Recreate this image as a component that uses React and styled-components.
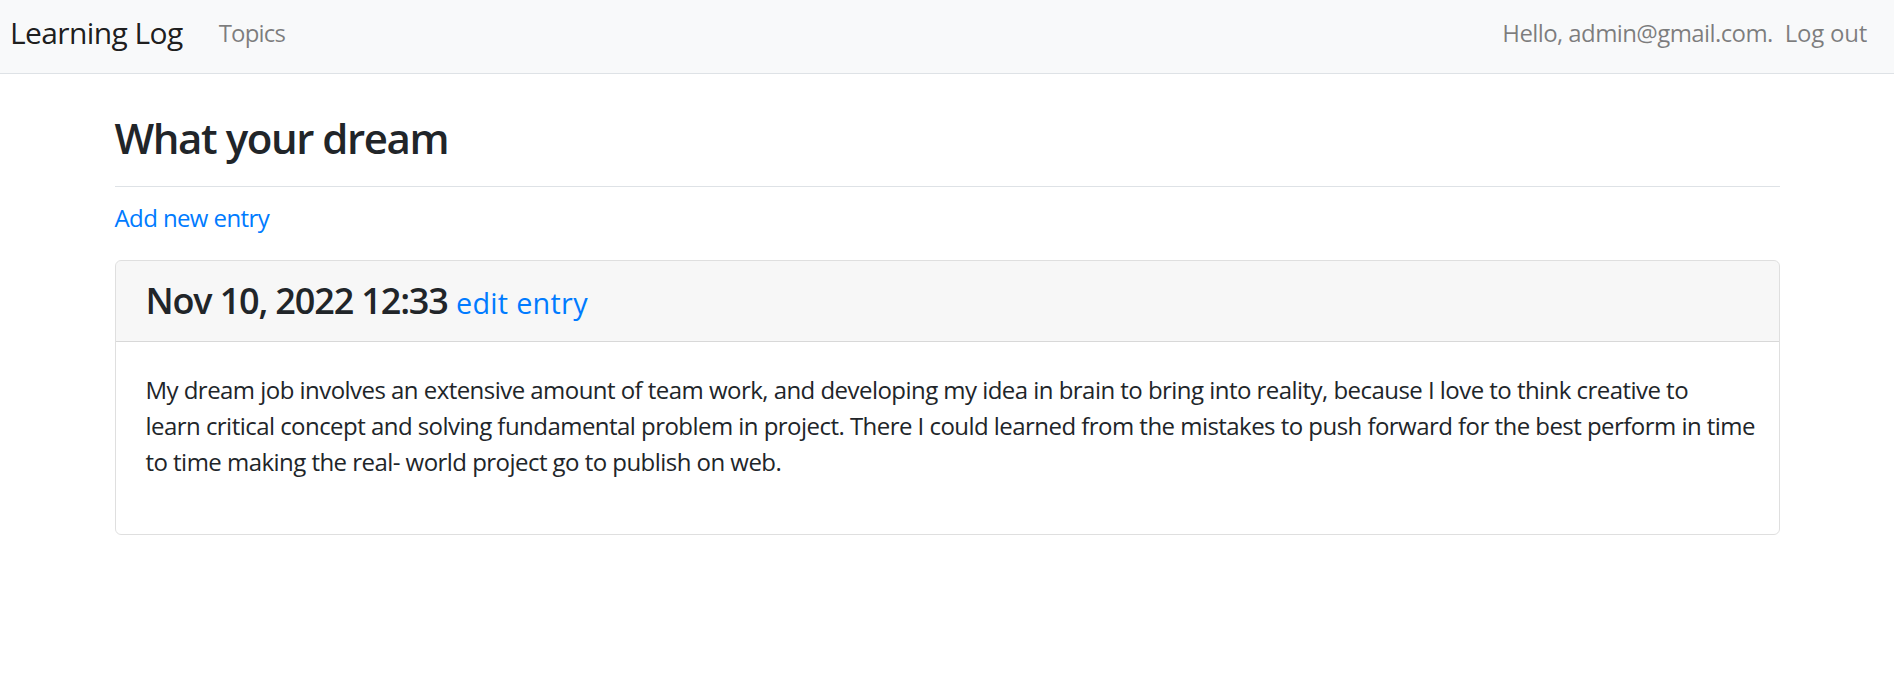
import React from 'react'
import styled, { createGlobalStyle } from 'styled-components'

const GlobalStyle = createGlobalStyle`
  * { box-sizing: border-box; }
  body {
    margin: 0;
    background: #fff;
    color: #212529;
    font-family: "Open Sans", "Noto Sans", sans-serif;
    font-size: 24px;
    line-height: 1.5;
    letter-spacing: -0.025em;
  }
  a { color: #007bff; text-decoration: none; }
`

const NavBar = styled.nav`
  display: flex;
  align-items: center;
  justify-content: space-between;
  height: 74px;
  padding: 0 27px 8px 10px;
  background: #f8f9fa;
  border-bottom: 1px solid #dee2e6;
`

const NavGroup = styled.div`
  display: flex;
  align-items: center;
`

const Brand = styled.a`
  font-size: 30px;
  line-height: 45px;
  color: rgba(0, 0, 0, 0.9);
  margin-right: 24px;
`

const NavLink = styled.a`
  font-size: 24px;
  line-height: 36px;
  padding: 0 ${(p) => (p.$tight ? '0' : '12px')};
  color: rgba(0, 0, 0, 0.5);
  letter-spacing: ${(p) => (p.$tight ? '-0.01em' : '-0.035em')};
`

const NavText = styled.span`
  font-size: 24px;
  line-height: 36px;
  color: rgba(0, 0, 0, 0.5);
  margin-right: 12px;
`

const Main = styled.main`
  max-width: 1710px;
  margin: 0 auto;
  padding: 39px 22.5px 0;
`

const PageHeader = styled.div`
  padding-bottom: 11px;
  margin-bottom: 13px;
  border-bottom: 1px solid #dee2e6;
`

const Title = styled.h3`
  margin: 0 0 12px;
  font-size: 42px;
  font-weight: 600;
  line-height: 1.2;
  letter-spacing: -0.034em;
`

const Para = styled.p`
  margin: 0 0 24px;
`

const EntryText = styled(Para)`
  letter-spacing: -0.0225em;
  white-space: nowrap;
`

const Card = styled.div`
  border: 1px solid rgba(0, 0, 0, 0.125);
  border-radius: 6px;
  margin-bottom: 24px;
  overflow: hidden;
`

const CardHeader = styled.h4`
  margin: 0;
  padding: 18px 30px;
  font-size: 36px;
  font-weight: 600;
  line-height: 1.2;
  letter-spacing: -0.032em;
  background: rgba(0, 0, 0, 0.03);
  border-bottom: 1px solid rgba(0, 0, 0, 0.125);

  small {
    font-size: 80%;
    font-weight: 400;
    letter-spacing: 0.01em;
  }
`

const CardBody = styled.div`
  padding: 30px;
`

export default function App() {
  return (
    <>
      <GlobalStyle />
      <NavBar>
        <NavGroup>
          <Brand href="#">Learning Log</Brand>
          <NavLink href="#">Topics</NavLink>
        </NavGroup>
        <NavGroup>
          <NavText>Hello, admin@gmail.com.</NavText>
          <NavLink href="#" $tight>Log out</NavLink>
        </NavGroup>
      </NavBar>
      <Main>
        <PageHeader>
          <Title>What your dream</Title>
        </PageHeader>
        <Para>
          <a href="#">Add new entry</a>
        </Para>
        <Card>
          <CardHeader>
            Nov 10, 2022 12:33 <small><a href="#">edit entry</a></small>
          </CardHeader>
          <CardBody>
            <EntryText>
              My dream job involves an extensive amount of team work, and developing my idea in brain to bring into reality, because I love to think creative to<br />
              learn critical concept and solving fundamental problem in project. There I could learned from the mistakes to push forward for the best perform in time<br />
              to time making the real- world project go to publish on web.
            </EntryText>
          </CardBody>
        </Card>
      </Main>
    </>
  )
}
